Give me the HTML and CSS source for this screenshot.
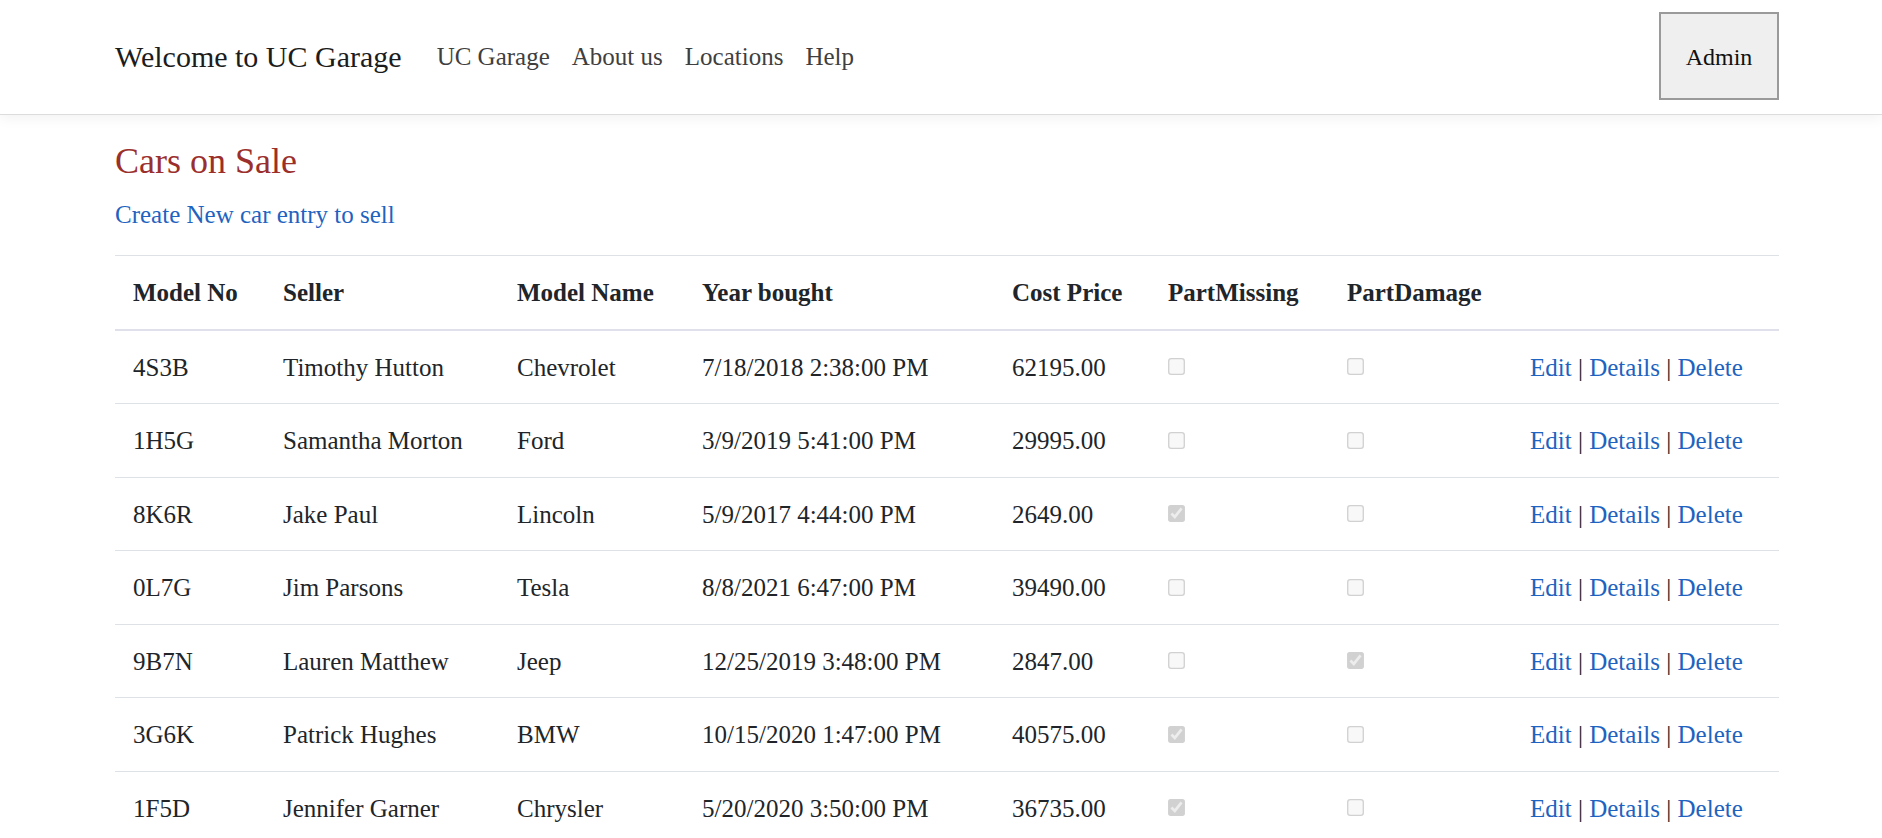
FILE: index.html
```html
<!DOCTYPE html>
<html lang="en">
<head>
<meta charset="utf-8">
<title>Cars on Sale - UC Garage</title>
<link rel="stylesheet" href="styles.css">
</head>
<body>
<header class="navbar">
  <div class="container nav-inner">
    <a class="brand" href="#">Welcome to UC Garage</a>
    <nav class="nav-links">
      <a href="#">UC Garage</a>
      <a href="#">About us</a>
      <a href="#">Locations</a>
      <a href="#">Help</a>
    </nav>
    <button class="admin-btn" type="button">Admin</button>
  </div>
</header>
<main class="container main">
  <h2 class="page-title">Cars on Sale</h2>
  <p class="create"><a href="#">Create New car entry to sell</a></p>
  <table class="cars">
    <colgroup>
      <col class="c-no"><col class="c-seller"><col class="c-name"><col class="c-year"><col class="c-cost"><col class="c-miss"><col class="c-dmg"><col class="c-act">
    </colgroup>
    <thead>
      <tr><th>Model No</th><th>Seller</th><th>Model Name</th><th>Year bought</th><th>Cost Price</th><th>PartMissing</th><th>PartDamage</th><th></th></tr>
    </thead>
    <tbody>
      <tr><td>4S3B</td><td>Timothy Hutton</td><td>Chevrolet</td><td>7/18/2018 2:38:00 PM</td><td>62195.00</td><td><input class="chk" type="checkbox" disabled></td><td><input class="chk" type="checkbox" disabled></td><td class="act"><a href="#">Edit</a> | <a href="#">Details</a> | <a href="#">Delete</a></td></tr>
      <tr><td>1H5G</td><td>Samantha Morton</td><td>Ford</td><td>3/9/2019 5:41:00 PM</td><td>29995.00</td><td><input class="chk" type="checkbox" disabled></td><td><input class="chk" type="checkbox" disabled></td><td class="act"><a href="#">Edit</a> | <a href="#">Details</a> | <a href="#">Delete</a></td></tr>
      <tr><td>8K6R</td><td>Jake Paul</td><td>Lincoln</td><td>5/9/2017 4:44:00 PM</td><td>2649.00</td><td><input class="chk" type="checkbox" disabled checked></td><td><input class="chk" type="checkbox" disabled></td><td class="act"><a href="#">Edit</a> | <a href="#">Details</a> | <a href="#">Delete</a></td></tr>
      <tr><td>0L7G</td><td>Jim Parsons</td><td>Tesla</td><td>8/8/2021 6:47:00 PM</td><td>39490.00</td><td><input class="chk" type="checkbox" disabled></td><td><input class="chk" type="checkbox" disabled></td><td class="act"><a href="#">Edit</a> | <a href="#">Details</a> | <a href="#">Delete</a></td></tr>
      <tr><td>9B7N</td><td>Lauren Matthew</td><td>Jeep</td><td>12/25/2019 3:48:00 PM</td><td>2847.00</td><td><input class="chk" type="checkbox" disabled></td><td><input class="chk" type="checkbox" disabled checked></td><td class="act"><a href="#">Edit</a> | <a href="#">Details</a> | <a href="#">Delete</a></td></tr>
      <tr><td>3G6K</td><td>Patrick Hughes</td><td>BMW</td><td>10/15/2020 1:47:00 PM</td><td>40575.00</td><td><input class="chk" type="checkbox" disabled checked></td><td><input class="chk" type="checkbox" disabled></td><td class="act"><a href="#">Edit</a> | <a href="#">Details</a> | <a href="#">Delete</a></td></tr>
      <tr><td>1F5D</td><td>Jennifer Garner</td><td>Chrysler</td><td>5/20/2020 3:50:00 PM</td><td>36735.00</td><td><input class="chk" type="checkbox" disabled checked></td><td><input class="chk" type="checkbox" disabled></td><td class="act"><a href="#">Edit</a> | <a href="#">Details</a> | <a href="#">Delete</a></td></tr>
    </tbody>
  </table>
</main>
</body>
</html>
```
FILE: styles.css
```css
html, body {
  margin: 0;
  padding: 0;
  background: #fff;
}
body {
  font-family: "Liberation Serif", "Times New Roman", serif;
  font-size: 25px;
  color: #212529;
  overflow-x: hidden;
}
a {
  text-decoration: none;
}
.container {
  width: 1664px;
  margin-left: 115px;
}
.navbar {
  height: 114px;
  border-bottom: 1px solid #dcdcdc;
  box-shadow: 0 4px 12px rgba(0, 0, 0, 0.05);
  background: #fff;
}
.nav-inner {
  height: 100%;
  display: flex;
  align-items: center;
}
.brand {
  font-size: 30px;
  color: #1c1c1c;
  margin-right: 24px;
}
.nav-links {
  display: flex;
  flex: 1;
}
.nav-links a {
  color: #3f3f3f;
  padding: 0 11px;
}
.admin-btn {
  font-family: "Liberation Serif", "Times New Roman", serif;
  font-size: 24px;
  color: #111;
  width: 120px;
  height: 88px;
  margin-top: -3px;
  padding: 4px 0 0;
  background: #efefef;
  border: 2px solid #9a9a9a;
  border-radius: 0;
}
.main {
  padding-top: 25px;
}
.page-title {
  font-size: 36px;
  font-weight: normal;
  color: #9b2f2c;
  margin: 0;
  line-height: 43px;
}
.create {
  margin: 13px 0 22px;
  line-height: 37px;
}
.create a, .act a {
  color: #1e63c0;
}
.cars {
  width: 1664px;
  table-layout: fixed;
  border-collapse: collapse;
  border-top: 1px solid #dee2e6;
}
.c-no { width: 150px; }
.c-seller { width: 234px; }
.c-name { width: 185px; }
.c-year { width: 310px; }
.c-cost { width: 156px; }
.c-miss { width: 179px; }
.c-dmg { width: 183px; }
.c-act { width: 267px; }
.cars th, .cars td {
  text-align: left;
  padding: 18px 18px 17px;
  line-height: 37.5px;
  vertical-align: middle;
  white-space: nowrap;
}
.cars th {
  font-weight: bold;
  border-bottom: 2px solid #dfe0ea;
}
.cars tbody tr + tr td {
  border-top: 1px solid #dee2e6;
}
.chk {
  width: 13px;
  height: 13px;
  margin: 0 0 0 2px;
  vertical-align: middle;
  position: relative;
  top: -3px;
  transform: scale(1.3);
}
.act {
  color: #222;
}
```
